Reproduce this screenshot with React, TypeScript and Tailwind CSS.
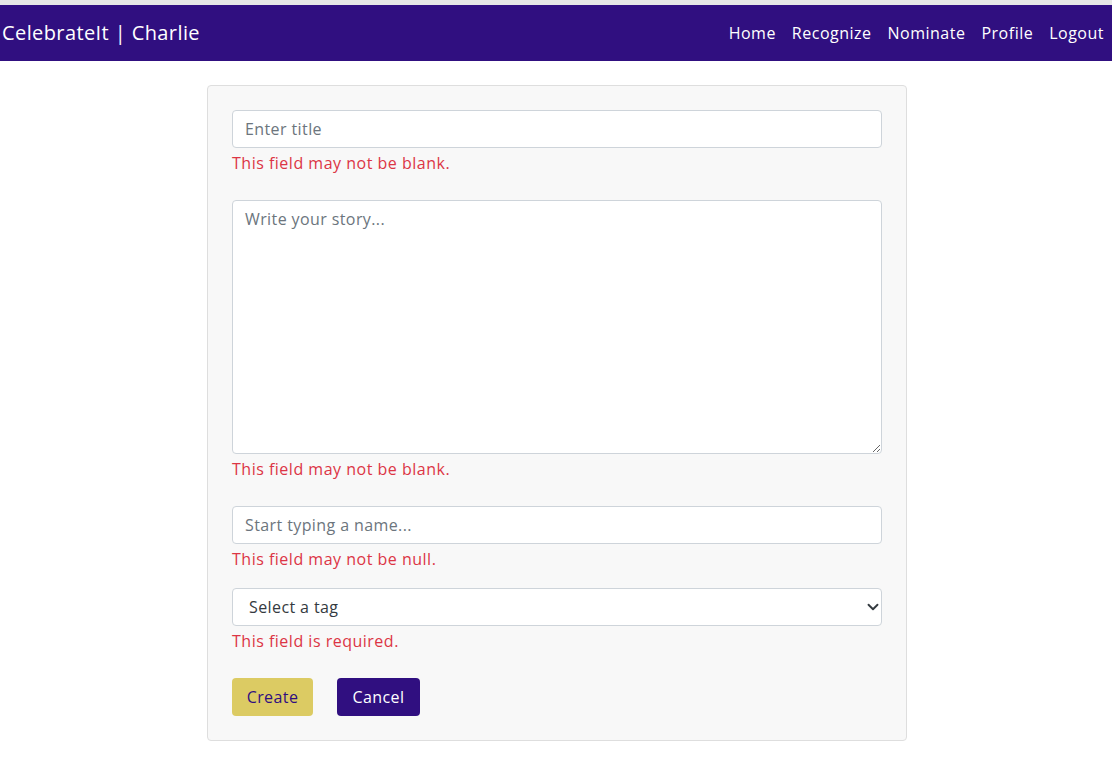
import React from "react";

export default function App() {
  const font = { fontFamily: '"Open Sans", "Noto Sans", Arial, sans-serif' };
  const input =
    "block h-[38px] w-full rounded-[4px] border border-[#ced4da] bg-white px-[12px] text-[16px] tracking-[0.4px] text-[#212529] placeholder:text-[#6c757d] outline-none";
  const err = "mt-[3px] text-[16px] leading-[24px] tracking-[0.5px] text-[#dc3545]";
  return (
    <div className="min-h-[758px] bg-white" style={font}>
      <div className="h-[5px] bg-[#e6e6e6]" />
      <nav className="flex h-[56px] items-center justify-between bg-[#300f80] pl-[2px] pr-[8px]">
        <span className="text-[20px] tracking-[0.4px] text-white">CelebrateIt | Charlie</span>
        <div className="flex items-center text-[16px] tracking-[0.5px] text-white">
          <a className="px-[8px]">Home</a>
          <a className="px-[8px]">Recognize</a>
          <a className="px-[8px]">Nominate</a>
          <a className="px-[8px]">Profile</a>
          <a className="pl-[8px]">Logout</a>
        </div>
      </nav>
      <div className="flex justify-center pl-[2px] pt-[24px]">
        <form className="w-[700px] rounded-[4px] border border-[#dedede] bg-[#f8f8f8] px-[24px] pt-[24px] pb-[24px]">
          <input className={input} placeholder="Enter title" />
          <div className={err}>This field may not be blank.</div>
          <textarea
            className="mt-[25px] block h-[254px] w-full rounded-[4px] border border-[#ced4da] bg-white px-[12px] py-[6px] text-[16px] leading-[24px] tracking-[0.4px] text-[#212529] placeholder:text-[#6c757d] outline-none"
            placeholder="Write your story..."
          />
          <div className={err}>This field may not be blank.</div>
          <input className={"mt-[25px] " + input} placeholder="Start typing a name..." />
          <div className={err}>This field may not be null.</div>
          <div className="relative mt-[17px]">
            <select
              className="block h-[38px] w-full appearance-none rounded-[4px] border border-[#ced4da] bg-white pl-[16px] pr-[36px] text-[16px] tracking-[0.4px] text-[#343a40] outline-none"
              defaultValue=""
            >
              <option value="">Select a tag</option>
            </select>
            <svg className="pointer-events-none absolute right-[3px] top-[13px]" width="12" height="12" viewBox="0 0 16 16">
              <path d="M2 5l6 6 6-6" fill="none" stroke="#343a40" strokeWidth="2.5" strokeLinecap="round" strokeLinejoin="round" />
            </svg>
          </div>
          <div className={err}>This field is required.</div>
          <div className="mt-[25px] flex gap-[24px]">
            <button type="button" className="h-[38px] w-[81px] rounded-[4px] bg-[#dccb63] text-[16px] tracking-[0.4px] text-[#300f80]">Create</button>
            <button type="button" className="h-[38px] w-[83px] rounded-[4px] bg-[#300f80] text-[16px] tracking-[0.4px] text-white">Cancel</button>
          </div>
        </form>
      </div>
    </div>
  );
}
